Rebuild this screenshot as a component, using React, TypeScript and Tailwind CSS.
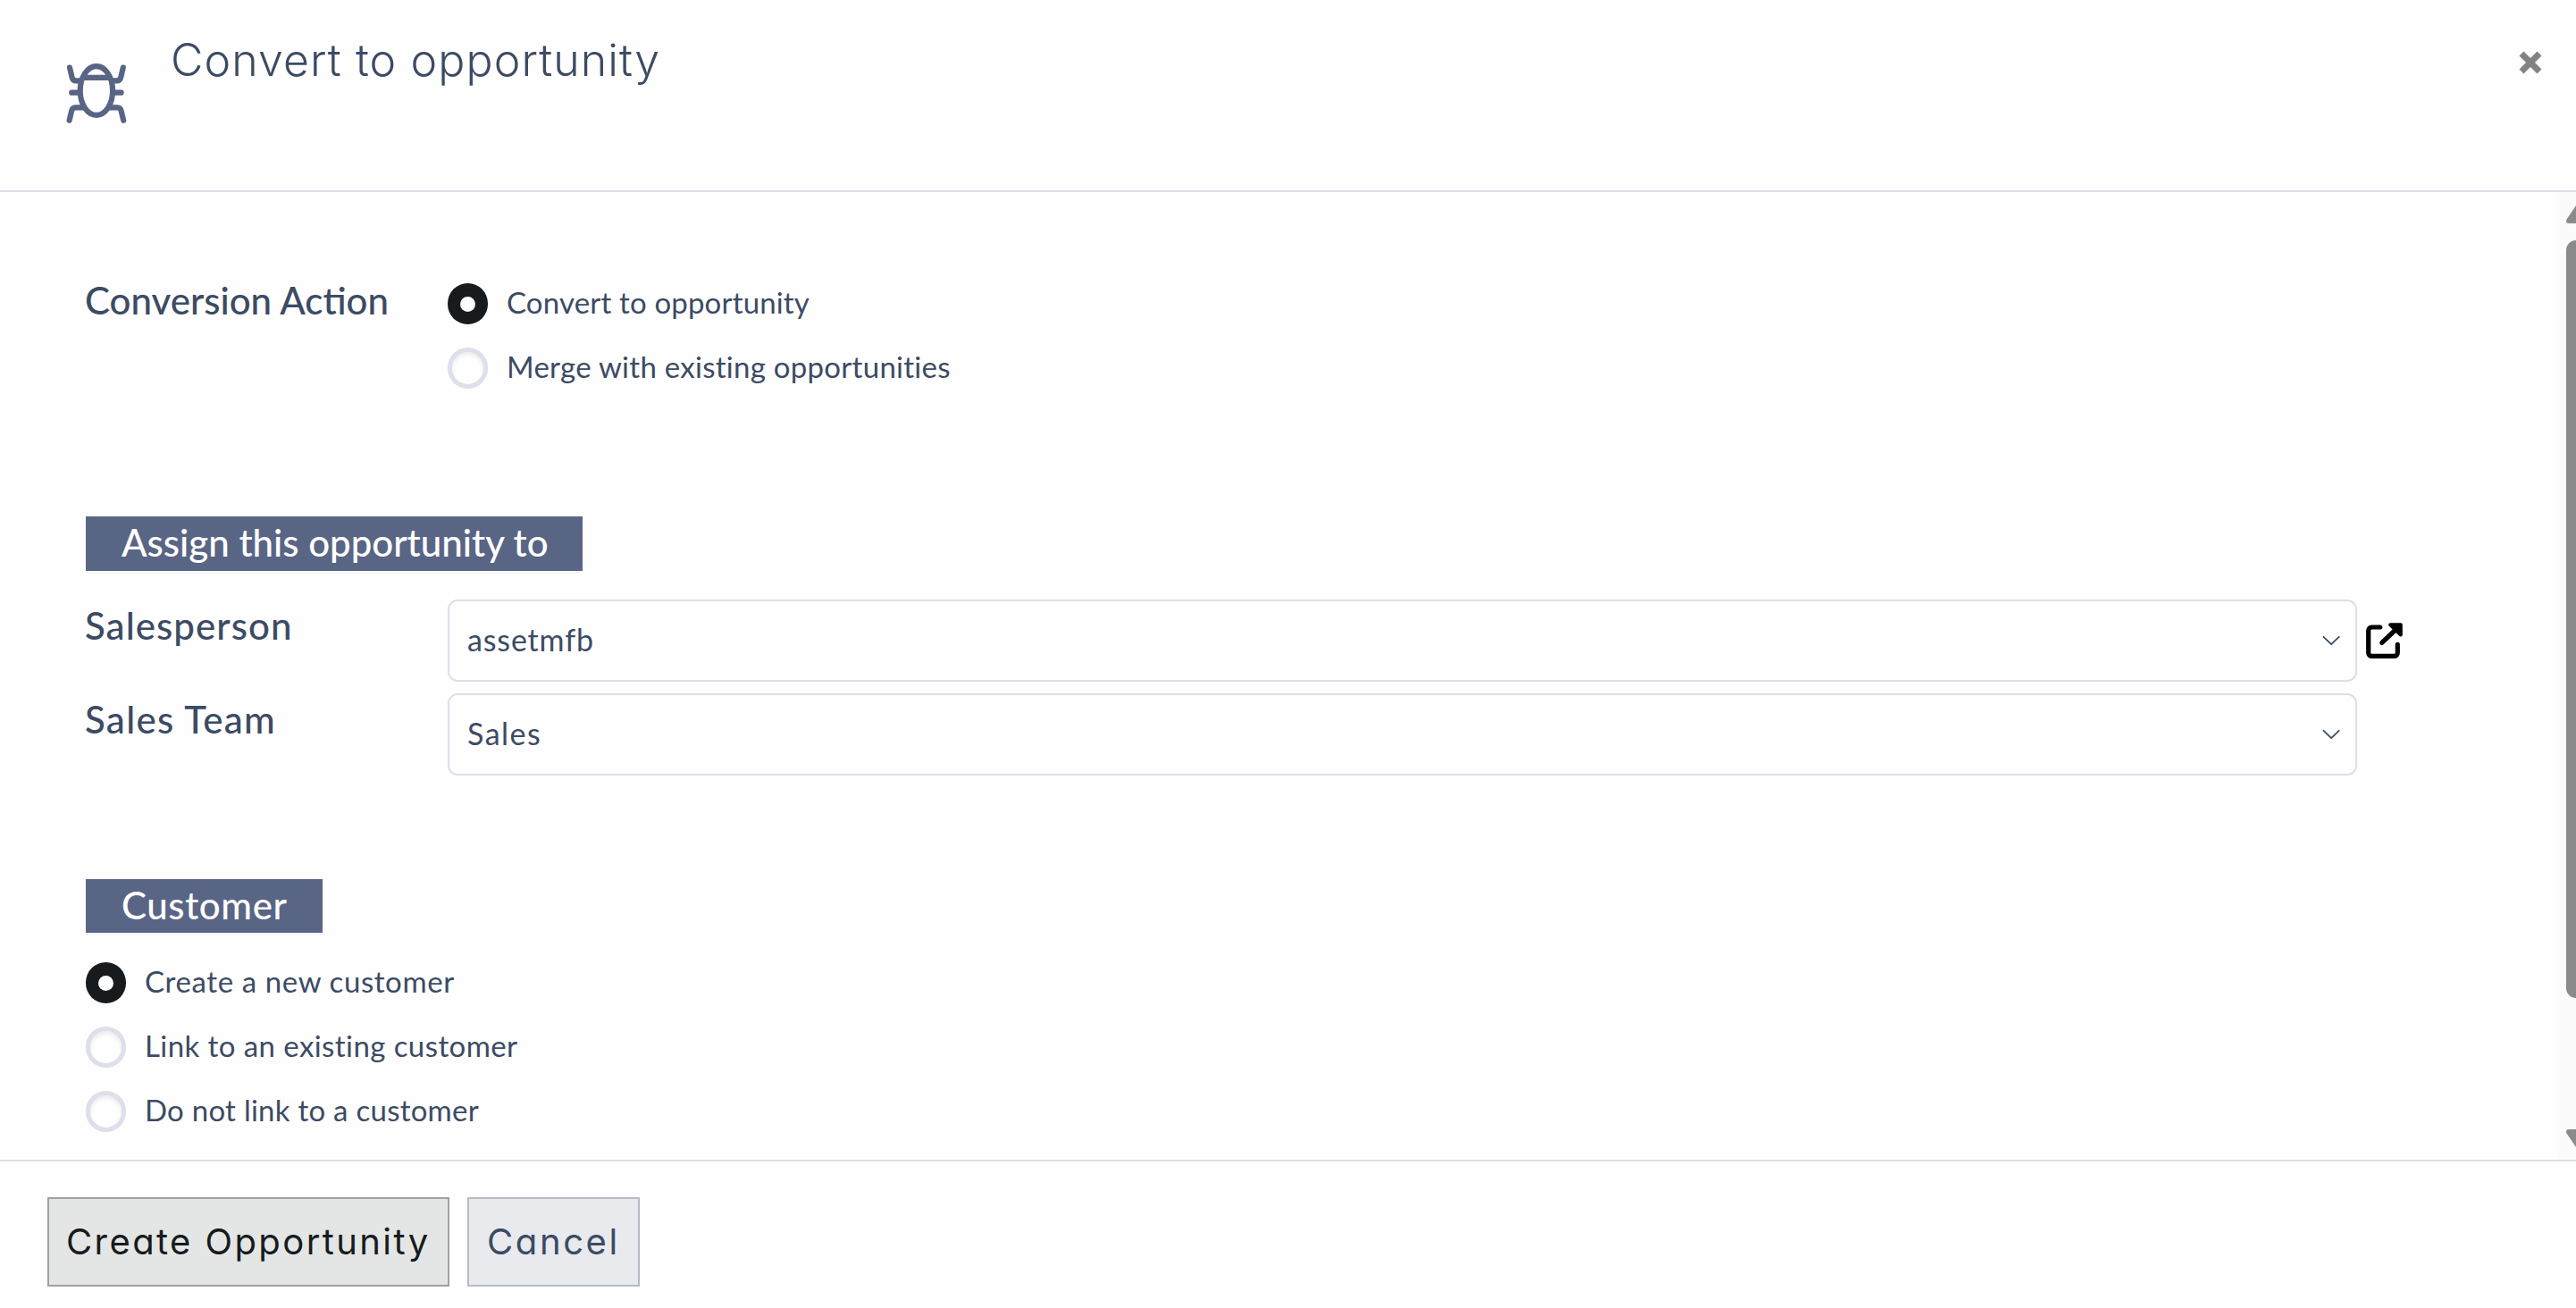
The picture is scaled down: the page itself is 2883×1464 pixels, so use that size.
interface RadioItem {
  label: string;
  checked?: boolean;
  tracking: string;
}

const conversionActions: RadioItem[] = [
  { label: "Convert to opportunity", checked: true, tracking: "tracking-[0.16px]" },
  { label: "Merge with existing opportunities", tracking: "tracking-[0.27px]" },
];

const customerActions: RadioItem[] = [
  { label: "Create a new customer", checked: true, tracking: "tracking-[0.6px]" },
  { label: "Link to an existing customer", tracking: "tracking-[0.42px]" },
  { label: "Do not link to a customer", tracking: "tracking-[0.25px]" },
];

const BugIcon = () => (
  <svg className="mt-[62px] h-[86px] w-[86px] shrink-0" viewBox="0 0 86 86" fill="none" stroke="#596585" strokeWidth={6.2} strokeLinecap="round">
    <ellipse cx="41.9" cy="39.5" rx="18.2" ry="27.4" />
    <path strokeLinecap="butt" d="M25 24.8h33.8" />
    <path d="M12 13.6l2.5 10.6q1 4.2 4.5 4.2h4M14.2 41.7h7.5M11.6 72.8l2.5-10.6q1-3.8 4.5-3.8h8" />
    <path d="M71.8 13.6l-2.5 10.6q-1 4.2-4.5 4.2h-4M69.6 41.7h-7.5M72.2 72.8l-2.5-10.6q-1-3.8-4.5-3.8h-8" />
  </svg>
);

const CloseIcon = () => (
  <svg className="h-[26px] w-[26px]" viewBox="0 0 26 26" stroke="#828282" strokeWidth={7}>
    <path d="M3 3l20 20M23 3L3 23" />
  </svg>
);

const ChevronIcon = () => (
  <svg className="mt-0.5 h-3 w-5" viewBox="0 0 20 12" fill="none" stroke="#3c4b64" strokeWidth={1.8} strokeLinecap="round" strokeLinejoin="round">
    <path d="M1.5 1.8l8.6 8.4 8.6-8.4" />
  </svg>
);

const ExternalLinkIcon = () => (
  <svg className="mt-6 ml-2 h-11 w-11" viewBox="0 0 44 44" fill="none" stroke="#000" strokeWidth={5.2} strokeLinecap="round" strokeLinejoin="round">
    <path d="M17.8 7H8.4a3.7 3.7 0 0 0-3.7 3.7v25a3.7 3.7 0 0 0 3.7 3.7h25.2a3.7 3.7 0 0 0 3.7-3.7v-9.4" />
    <path d="M19.8 24.4L36 9" />
    <path d="M29.2 4.2h11.6v11.3z" fill="#000" strokeWidth={4} />
  </svg>
);

function RadioGroup({ items }: { items: RadioItem[] }) {
  return (
    <div className="flex flex-col gap-[26px]">
      {items.map((item) => (
        <label key={item.label} className="flex h-[46px] items-start gap-[21px]">
          {item.checked ? (
            <span className="flex h-[46px] w-[45px] items-center justify-center rounded-full bg-[#171b1d]">
              <span className="h-[17px] w-[17px] rounded-full bg-white" />
            </span>
          ) : (
            <span className="h-[46px] w-[45px] rounded-full border-5 border-[#dddfea] shadow-[inset_0_3px_4px_rgba(0,0,0,0.08)]" />
          )}
          <span className={`text-[33px] leading-[43px] whitespace-nowrap ${item.tracking}`}>{item.label}</span>
        </label>
      ))}
    </div>
  );
}

function SelectField({ value, tracking }: { value: string; tracking: string }) {
  return (
    <div className="flex h-[92px] w-[2137px] items-center justify-between rounded-[11px] border-2 border-[#dddfea] pr-[17px] pb-[3px] pl-5">
      <span className={`text-[34px] ${tracking}`}>{value}</span>
      <ChevronIcon />
    </div>
  );
}

export default function App() {
  return (
    <div className="flex h-[1464px] w-[2883px] flex-col overflow-hidden bg-[#fefefe] font-['Lato',sans-serif] text-[#3c4b64]">
      <header className="flex h-[215px] items-start border-b-2 border-[#dadfea] pl-[66px]">
        <BugIcon />
        <h4 className="mt-[37px] ml-[39px] font-['Inter',sans-serif] text-[50px] leading-[60px] font-light tracking-[1.1px]">
          Convert to opportunity
        </h4>
        <button className="mt-[57px] mr-[38px] ml-auto">
          <CloseIcon />
        </button>
      </header>

      <main className="flex h-[1083px]">
        <div className="flex-1 pt-[91px] pl-24">
          <div className="flex">
            <div className="-ml-px w-[406px] text-[42px] leading-[60px] font-medium">Conversion Action</div>
            <div className="mt-[11px]">
              <RadioGroup items={conversionActions} />
            </div>
          </div>

          <h2 className="mt-[143px] h-[61px] w-[556px] bg-[#596585] pl-10 text-[42px] leading-[58px] font-medium text-white shadow-[0_3px_0_#f6f7f8]">
            Assign this opportunity to
          </h2>
          <div className="mt-8 flex">
            <div className="-mt-px -ml-px w-[406px] text-[42px] leading-[60px] font-medium tracking-[1.06px]">Salesperson</div>
            <SelectField value="assetmfb" tracking="tracking-[0.85px]" />
            <ExternalLinkIcon />
          </div>
          <div className="mt-[13px] flex">
            <div className="-mt-px -ml-px w-[406px] text-[42px] leading-[60px] font-medium tracking-[1.3px]">Sales Team</div>
            <SelectField value="Sales" tracking="tracking-[1.45px]" />
          </div>

          <h2 className="mt-[116px] mb-[33px] h-[60px] w-[265px] bg-[#596585] pl-10 text-[42px] leading-[58px] font-medium tracking-[0.6px] text-white shadow-[0_3px_0_#f6f7f8]">
            Customer
          </h2>
          <RadioGroup items={customerActions} />
        </div>

        <div className="flex w-5 flex-col items-end bg-[#fbfbfb] pt-[15px]">
          <svg className="h-5 w-[11px]" viewBox="0 0 11 20" fill="#8b8b8b">
            <path d="M11 0v20H3Q-1 20 .5 15.5z" />
          </svg>
          <div className="mt-[19px] h-[848px] w-[11px] rounded-l-[11px] bg-[#8b8b8b]" />
          <svg className="mt-[147px] h-5 w-[11px]" viewBox="0 0 11 20" fill="#8b8b8b">
            <path d="M11 20V0H3Q-1 0 .5 4.5z" />
          </svg>
        </div>
      </main>

      <footer className="flex flex-1 gap-5 border-t-2 border-[#dadfea] pt-10 pl-[53px] font-['Inter',sans-serif] text-[40px] [font-feature-settings:'cv11']">
        <button className="h-[100px] w-[450px] border-2 border-[#9fa1a1] bg-[#e4e6e5] pl-[19px] text-left tracking-[2.4px] whitespace-nowrap text-[#171b1d]">
          Create Opportunity
        </button>
        <button className="h-[100px] w-[193px] border-2 border-[#b5bbc5] bg-[#e9eaee] pl-5 text-left tracking-[2.6px]">Cancel</button>
      </footer>
    </div>
  );
}
